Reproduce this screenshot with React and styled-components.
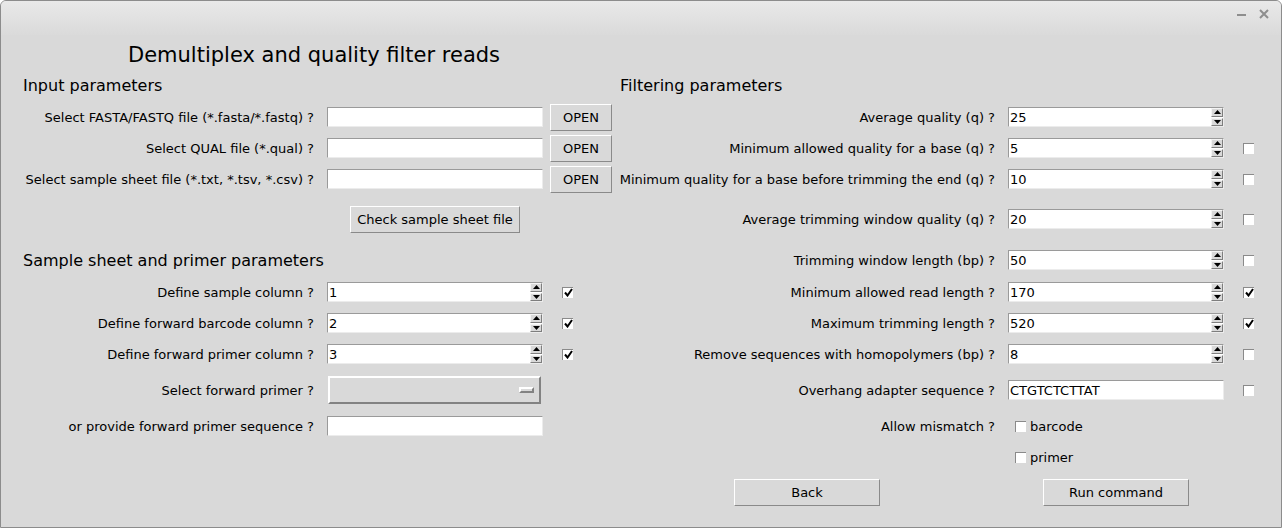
import React from "react";
import styled, { createGlobalStyle } from "styled-components";

const Global = createGlobalStyle`
  body {
    margin: 0;
    background: #ffffff;
    font-family: "DejaVu Sans", "Liberation Sans", sans-serif;
  }
  * {
    box-sizing: border-box;
  }
`;

const Window = styled.div`
  width: 1282px;
  height: 528px;
  border: 1px solid #8c8c8c;
  border-radius: 6px 6px 0 0;
  background: #d9d9d9;
  display: flex;
  flex-direction: column;
  overflow: hidden;
  color: #000;
`;

const TitleBar = styled.div`
  height: 34px;
  flex: none;
  background: linear-gradient(#e9e9e9, #dadada);
  display: flex;
  justify-content: flex-end;
  align-items: center;
  gap: 12px;
  padding: 0 12px 8px 0;
`;

const Form = styled.div`
  flex: 1;
  display: grid;
  grid-template-columns: 319px 228px 68px 386px 228px 1fr;
  grid-template-rows: 35px 31px 32px 30px 32px 48px 34px 30px 32px 30px 42px 30px 32px 38px 1fr;
  font-size: 13px;
`;

const Cell = styled.div`
  grid-column: ${(p) => p.$col};
  grid-row: ${(p) => p.$row};
  display: flex;
  align-items: center;
  justify-content: ${(p) => (p.$center ? "center" : "flex-start")};
  min-width: 0;
`;

const Title = styled(Cell)`
  font-size: 21px;
  padding: 4px 0 0 127px;
  white-space: nowrap;
`;

const Heading = styled(Cell)`
  font-size: 16px;
  padding-left: ${(p) => p.$pad}px;
  white-space: nowrap;
`;

const Label = styled(Cell)`
  justify-content: flex-end;
  padding-right: ${(p) => p.$pad}px;
  white-space: nowrap;
`;

const Entry = styled.div`
  width: 216px;
  height: 20px;
  margin-left: ${(p) => p.$ml}px;
  background: #fff;
  border: 1px solid;
  border-color: #9a9a9a #ececec #ececec #9a9a9a;
  display: flex;
  align-items: center;
  padding-left: 1px;
  font-size: 13px;
`;

const Value = styled.span`
  flex: 1;
`;

const Arrows = styled.div`
  width: 12px;
  height: 18px;
  display: flex;
  flex-direction: column;
  gap: 1px;
`;

const ArrowBtn = styled.div`
  flex: 1;
  background: #d9d9d9;
  border: 1px solid;
  border-color: #f4f4f4 #7e7e7e #7e7e7e #f4f4f4;
  display: flex;
  align-items: center;
  justify-content: center;
`;

const Button = styled.div`
  width: ${(p) => p.$w}px;
  height: 27px;
  margin-left: ${(p) => p.$ml || 0}px;
  border: 1px solid;
  border-color: #ffffff #8a8a8a #8a8a8a #ffffff;
  background: #d9d9d9;
  display: flex;
  align-items: center;
  justify-content: center;
  white-space: nowrap;
`;

const CheckBox = styled.div`
  width: 11px;
  height: 11px;
  margin-left: ${(p) => p.$ml}px;
  background: #fff;
  border-top: 1px solid #8a8a8a;
  border-left: 1px solid #8a8a8a;
  display: flex;
  align-items: center;
  justify-content: center;
`;

const CheckLabel = styled.span`
  margin-left: 4px;
`;

const Combo = styled.div`
  width: 213px;
  height: 28px;
  margin-left: 8px;
  border: 2px solid;
  border-color: #ffffff #828282 #828282 #ffffff;
  display: flex;
  align-items: center;
  justify-content: flex-end;
  padding-right: 5px;
`;

const Indicator = styled.div`
  width: 15px;
  height: 6px;
  border: 2px solid;
  border-color: #ffffff #828282 #828282 #ffffff;
`;

const Up = () => (
  <svg width="7" height="4" viewBox="0 0 7 4">
    <path d="M0 4 L3.5 0 L7 4 Z" fill="#000" />
  </svg>
);

const Down = () => (
  <svg width="7" height="4" viewBox="0 0 7 4">
    <path d="M0 0 L7 0 L3.5 4 Z" fill="#000" />
  </svg>
);

const Tick = () => (
  <svg width="9" height="9" viewBox="0 0 9 9">
    <path d="M1 4.5 L3.5 7.5 L8 1" stroke="#000" strokeWidth="2" fill="none" />
  </svg>
);

const Spin = ({ value, ml }) => (
  <Entry $ml={ml}>
    <Value>{value}</Value>
    <Arrows>
      <ArrowBtn>
        <Up />
      </ArrowBtn>
      <ArrowBtn>
        <Down />
      </ArrowBtn>
    </Arrows>
  </Entry>
);

const Check = ({ on, ml }) => <CheckBox $ml={ml}>{on && <Tick />}</CheckBox>;

const files = [
  "Select FASTA/FASTQ file (*.fasta/*.fastq) ?",
  "Select QUAL file (*.qual) ?",
  "Select sample sheet file (*.txt, *.tsv, *.csv) ?",
];

const columns = [
  ["Define sample column ?", "1"],
  ["Define forward barcode column ?", "2"],
  ["Define forward primer column ?", "3"],
];

const filters = [
  ["Average quality (q) ?", "25", null],
  ["Minimum allowed quality for a base (q) ?", "5", false],
  ["Minimum quality for a base before trimming the end (q) ?", "10", false],
  ["Average trimming window quality (q) ?", "20", false],
  ["Trimming window length (bp) ?", "50", false],
  ["Minimum allowed read length ?", "170", true],
  ["Maximum trimming length ?", "520", true],
  ["Remove sequences with homopolymers (bp) ?", "8", false],
];

const App = () => (
  <>
    <Global />
    <Window>
      <TitleBar>
        <svg width="10" height="10" viewBox="0 0 10 10">
          <path d="M0 6 H9" stroke="#8e8e8e" strokeWidth="2" />
        </svg>
        <svg width="10" height="10" viewBox="0 0 10 10">
          <path d="M1 1 L9 9 M9 1 L1 9" stroke="#8e8e8e" strokeWidth="2" />
        </svg>
      </TitleBar>
      <Form>
        <Title $col="1 / 4" $row={1}>
          Demultiplex and quality filter reads
        </Title>
        <Heading $col="1 / 4" $row={2} $pad={22}>
          Input parameters
        </Heading>
        <Heading $col="4" $row={2} $pad={4}>
          Filtering parameters
        </Heading>

        {files.map((label, i) => (
          <React.Fragment key={label}>
            <Label $col="1" $row={3 + i} $pad={6}>
              {label}
            </Label>
            <Cell $col="2" $row={3 + i}>
              <Entry $ml={7} />
            </Cell>
            <Cell $col="3" $row={3 + i}>
              <Button $w={62} $ml={2}>
                OPEN
              </Button>
            </Cell>
          </React.Fragment>
        ))}
        <Cell $col="2" $row={6} $center>
          <Button $w={170} $ml={2}>
            Check sample sheet file
          </Button>
        </Cell>

        <Heading $col="1 / 4" $row={7} $pad={22}>
          Sample sheet and primer parameters
        </Heading>
        {columns.map(([label, v], i) => (
          <React.Fragment key={label}>
            <Label $col="1" $row={8 + i} $pad={6}>
              {label}
            </Label>
            <Cell $col="2" $row={8 + i}>
              <Spin value={v} ml={7} />
            </Cell>
            <Cell $col="3" $row={8 + i}>
              <Check on ml={14} />
            </Cell>
          </React.Fragment>
        ))}
        <Label $col="1" $row={11} $pad={6}>
          Select forward primer ?
        </Label>
        <Cell $col="2" $row={11}>
          <Combo>
            <Indicator />
          </Combo>
        </Cell>
        <Label $col="1" $row={12} $pad={6}>
          or provide forward primer sequence ?
        </Label>
        <Cell $col="2" $row={12}>
          <Entry $ml={7} />
        </Cell>

        {filters.map(([label, v, on], i) => (
          <React.Fragment key={label}>
            <Label $col="4" $row={3 + i} $pad={7}>
              {label}
            </Label>
            <Cell $col="5" $row={3 + i}>
              <Spin value={v} ml={6} />
            </Cell>
            {on !== null && (
              <Cell $col="6" $row={3 + i}>
                <Check on={on} ml={13} />
              </Cell>
            )}
          </React.Fragment>
        ))}
        <Label $col="4" $row={11} $pad={7}>
          Overhang adapter sequence ?
        </Label>
        <Cell $col="5" $row={11}>
          <Entry $ml={6}>CTGTCTCTTAT</Entry>
        </Cell>
        <Cell $col="6" $row={11}>
          <Check ml={13} />
        </Cell>
        <Label $col="4" $row={12} $pad={7}>
          Allow mismatch ?
        </Label>
        <Cell $col="5" $row={12}>
          <Check ml={13} />
          <CheckLabel>barcode</CheckLabel>
        </Cell>
        <Cell $col="5" $row={13}>
          <Check ml={13} />
          <CheckLabel>primer</CheckLabel>
        </Cell>

        <Cell $col="4" $row={14} $center>
          <Button $w={146} $ml={-4}>
            Back
          </Button>
        </Cell>
        <Cell $col="5" $row={14} $center>
          <Button $w={146}>Run command</Button>
        </Cell>
      </Form>
    </Window>
  </>
);

export default App;
